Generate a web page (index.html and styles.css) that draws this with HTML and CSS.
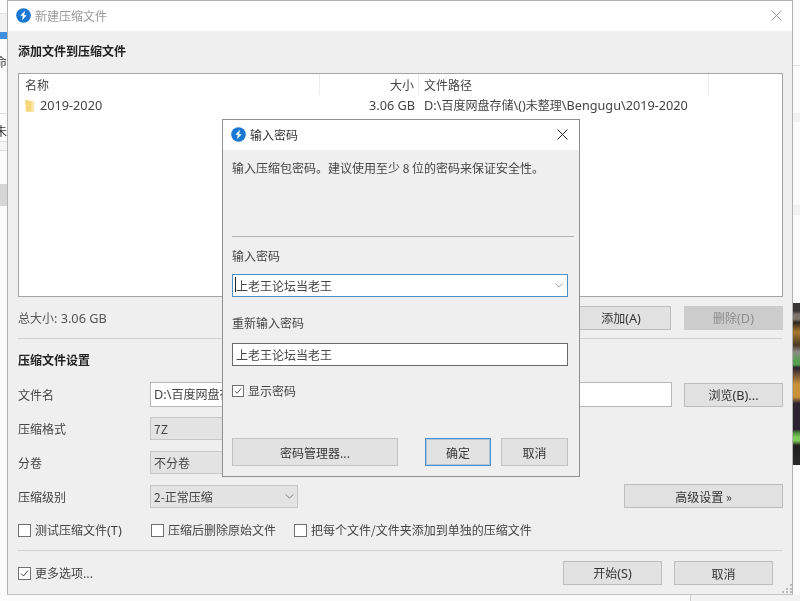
FILE: index.html
```html
<!DOCTYPE html>
<html lang="zh">
<head>
<meta charset="utf-8">
<title>新建压缩文件</title>
<link rel="stylesheet" href="styles.css">
</head>
<body>
<div class="desk">
  <div class="left-bg">
    <div class="lb lb-a"></div>
    <div class="lb lb-b"></div>
    <div class="lb lb-c"></div>
    <div class="lb lb-d"></div>
    <div class="lb lb-f"></div>
    <div class="lb-t lb-t1">命</div>
    <div class="lb-t lb-t2">未</div>
  </div>
  <div class="right-bg">
    <div class="rb rb-a"></div>
    <div class="rb rb-b"></div>
    <div class="rb rb-c"></div>
    <div class="photo"></div>
  </div>
  <div class="bottom-bg"></div>

  <div class="win main">
    <header class="bar main-bar">
      <svg class="logo" viewBox="0 0 16 16"><circle cx="8" cy="8" r="7.8" fill="#1a78d2"/><path d="M9.6 3 4.6 8.2h2.7L6.4 13l5-5.2H8.7z" fill="#fff"/></svg>
      <span class="main-title">新建压缩文件</span>
      <svg class="x x-dim" viewBox="0 0 11 11"><path d="M.5.5l10 10M10.5.5l-10 10"/></svg>
    </header>
    <div class="main-body">
      <h2 class="head head-top">添加文件到压缩文件</h2>
      <div class="list">
        <div class="list-head">
          <span class="c-name">名称</span>
          <span class="c-size">大小</span>
          <span class="c-path">文件路径</span>
          <span class="c-rest"></span>
        </div>
        <div class="list-row">
          <span class="c-name row-name"><svg class="folder" viewBox="0 0 11 14"><path d="M0 1h4l1 1h5v12H1z" fill="#f6d77c"/><path d="M7 2h3v12H7z" fill="#fbe7a8"/></svg><span class="lat">2019-2020</span></span>
          <span class="c-size lat">3.06 GB</span>
          <span class="c-path"><span class="lat">D:\</span>百度网盘存储<span class="lat">\()</span>未整理<span class="lat">\Bengugu\2019-2020</span></span>
        </div>
      </div>
      <div class="total-row">
        <span>总大小<span class="lat">: 3.06 GB</span></span>
        <div class="total-btns"><button class="btn b-add">添加<span class="lat">(A)</span></button><button class="btn b-del">删除<span class="lat">(D)</span></button></div>
      </div>
      <div class="rule"></div>
      <h2 class="head head-set">压缩文件设置</h2>
      <div class="form">
        <label>文件名</label>
        <div class="file-wrap"><div class="input file-input"><span class="lat">D:\</span>百度网盘存</div><button class="btn b-browse">浏览<span class="lat">(B)...</span></button></div>
        <label>压缩格式</label>
        <div class="select s-wide">7Z</div>
        <label>分卷</label>
        <div class="select s-wide">不分卷</div>
        <label class="level-label">压缩级别</label>
        <div class="level-wrap"><div class="select s-level">2-正常压缩<svg class="chev" viewBox="0 0 10 6"><path d="M.5.5 5 5 9.5.5"/></svg></div><button class="btn b-adv">高级设置 »</button></div>
      </div>
      <div class="checks">
        <span class="check ck1"><i class="box"></i><span>测试压缩文件<span class="lat">(T)</span></span></span>
        <span class="check ck2"><i class="box"></i>压缩后删除原始文件</span>
        <span class="check"><i class="box"></i>把每个文件/文件夹添加到单独的压缩文件</span>
      </div>
      <div class="rule rule-low"></div>
      <div class="foot">
        <span class="check"><i class="box"><svg viewBox="0 0 11 11"><path d="M2 5.5l2.5 2.5L9 2.5"/></svg></i>更多选项...</span>
        <div class="foot-btns"><button class="btn b-foot">开始<span class="lat">(S)</span></button><button class="btn b-foot">取消</button></div>
      </div>
    </div>
    <svg class="grip" viewBox="0 0 10 10"><path d="M8 1h2v2H8zM4 5h2v2H4zM8 5h2v2H8zM0 8h2v2H0zM4 8h2v2H4zM8 8h2v2H8z"/></svg>
  </div>

  <div class="win pw">
    <header class="bar pw-bar">
      <svg class="logo" viewBox="0 0 16 16"><circle cx="8" cy="8" r="7.8" fill="#1a78d2"/><path d="M9.6 3 4.6 8.2h2.7L6.4 13l5-5.2H8.7z" fill="#fff"/></svg>
      <span class="pw-title">输入密码</span>
      <svg class="x" viewBox="0 0 11 11"><path d="M.5.5l10 10M10.5.5l-10 10"/></svg>
    </header>
    <div class="pw-body">
      <p class="hint">输入压缩包密码。建议使用至少 8 位的密码来保证安全性。</p>
      <div class="pw-rule"></div>
      <div class="pw-label l1">输入密码</div>
      <div class="input pw-in focus"><i class="caret"></i>上老王论坛当老王<svg class="chev chev-pw" viewBox="0 0 10 6"><path d="M.5.5 5 5 9.5.5"/></svg></div>
      <div class="pw-label l2">重新输入密码</div>
      <div class="input pw-in dark">上老王论坛当老王</div>
      <span class="check show"><i class="box small"><svg viewBox="0 0 11 11"><path d="M2 5.5l2.5 2.5L9 2.5"/></svg></i>显示密码</span>
      <div class="pw-btns">
        <button class="btn b-mgr">密码管理器...</button>
        <button class="btn b-ok">确定</button>
        <button class="btn b-cancel">取消</button>
      </div>
    </div>
  </div>
</div>
</body>
</html>
```

FILE: styles.css
```css
* { box-sizing: border-box; }
html, body { margin: 0; padding: 0; }
body { width: 800px; height: 601px; overflow: hidden; background: #fbfbfb; font-family: "Noto Sans CJK SC", "Liberation Sans", sans-serif; font-size: 12px; color: #333; }
.desk { position: relative; width: 800px; height: 601px; overflow: hidden; filter: blur(0.3px); }
.lat { font-family: "Noto Sans", "Noto Sans CJK SC", sans-serif; font-size: 12.7px; }

.left-bg { position: absolute; left: 0; top: 0; width: 8px; height: 601px; background: #fcfcfc; overflow: hidden; }
.lb { position: absolute; left: 0; width: 8px; }
.lb-a { top: 13px; height: 19px; background: #f2f2f2; border-top: 1px solid #e2e2e2; }
.lb-b { top: 32px; height: 7px; background: #3d8fdc; }
.lb-c { top: 113px; height: 1px; background: #ddd; }
.lb-d { top: 141px; height: 10px; background: #f4f4f4; border-top: 1px solid #ddd; border-bottom: 1px solid #ddd; }
.lb-f { top: 184px; height: 22px; background: #d6d6d6; }
.lb-t { position: absolute; left: -5px; font-size: 12px; line-height: 14px; width: 13px; overflow: hidden; }
.lb-t1 { top: 55px; }
.lb-t2 { top: 124px; }

.right-bg { position: absolute; left: 792px; top: 0; width: 8px; height: 601px; background: #fbfbfb; }
.rb { position: absolute; left: 0; width: 8px; height: 1px; background: #e4e4e4; }
.rb-a { top: 65px; }
.rb-b { top: 113px; height: 9px; background: #f1f1f1; }
.rb-c { top: 205px; height: 10px; background: #f1f1f1; }
.photo { position: absolute; left: 1px; top: 303px; width: 7px; height: 162px; background: linear-gradient(180deg, #3a3634 0 5%, #7d746a 7% 10%, #2f2620 12%, #a8782c 18%, #4b3a24 26%, #8a8a84 30%, #56a050 36% 38%, #2a2030 40%, #c8913a 50% 58%, #2c2230 62% 78%, #4b8a3c 80%, #7ecb5c 83% 85%, #1e1e1e 88%, #2a2a2a 100%); }
.bottom-bg { position: absolute; left: 690px; top: 595px; width: 110px; height: 6px; background: #f2f2f2; border-left: 1px solid #cfcfcf; }

.win { position: absolute; background: #efefef; }
.main { left: 7px; top: 0; width: 786px; height: 595px; border: 1px solid #b2b2b2; border-bottom-color: #c4c4c4; }
.bar { display: flex; align-items: center; background: #fff; }
.main-bar { height: 30px; padding: 0 10px 1px 8px; }
.logo { width: 15px; height: 15px; flex: none; }
.main-title { margin-left: 4px; color: #9a9a9a; }
.x { width: 11px; height: 11px; margin-left: auto; fill: none; stroke: #222; stroke-width: 1; }
.x-dim { stroke: #9a9a9a; }
.main-body { padding: 0 9px 0 10px; position: relative; }
.head { margin: 0; font-size: 12px; line-height: 16px; font-weight: 700; color: #222; }
.head-top { padding-top: 12px; }
.list { margin-top: 14px; width: 765px; height: 224px; border: 1px solid #a4a4a4; background: #fff; }
.list-head, .list-row { display: flex; height: 20px; line-height: 20px; color: #444; }
.list-head { height: 21px; line-height: 21px; }
.c-name { width: 301px; padding-left: 6px; flex: none; }
.c-size { width: 99px; padding-right: 4px; text-align: right; flex: none; }
.c-path { width: 290px; padding-left: 5px; flex: none; white-space: nowrap; }
.c-rest { flex: 1; }
.list-head .c-name, .list-head .c-size, .list-head .c-path { border-right: 1px solid #ececec; }
.row-name { display: flex; align-items: center; gap: 5px; }
.folder { width: 10px; height: 13px; flex: none; }
.total-row { display: flex; justify-content: space-between; align-items: center; margin-top: 9px; height: 24px; color: #555; }
.total-btns { display: flex; gap: 13px; }
.btn { font: inherit; font-size: 12px; color: #333; background: #e1e1e1; border: 1px solid #bdbdbd; padding: 0; height: 24px; display: block; }
.b-add { width: 100px; }
.b-del { width: 99px; background: #cccccc; border-color: #cccccc; color: #8d8d8d; }
.rule { height: 1px; background: #d0d0d0; margin-top: 8px; width: 764px; }
.head-set { padding-top: 13px; }
.form { margin-top: 14px; display: grid; grid-template-columns: 132px 1fr; row-gap: 11px; align-items: center; }
.form label { color: #444; }
.input { background: #fff; border: 1px solid #9b9b9b; height: 24px; line-height: 22px; padding-left: 3px; color: #444; white-space: nowrap; overflow: hidden; }
.file-wrap { display: flex; gap: 12px; align-items: center; margin-bottom: -1px; }
.file-input { width: 522px; height: 25px; border-color: #b8b8b8; }
.b-browse { width: 99px; }
.select { height: 23px; line-height: 21px; background: #e3e3e3; border: 1px solid #c6c6c6; padding-left: 3px; color: #444; position: relative; }
.s-wide { width: 150px; }
.level-label { margin-top: -1px; }
.level-wrap { display: flex; justify-content: space-between; align-items: center; margin-top: -1px; }
.s-level { width: 148px; }
.b-adv { width: 159px; }
.chev { position: absolute; right: 3px; top: 8px; width: 9px; height: 5px; fill: none; stroke: #666; stroke-width: 1; }
.checks { display: flex; align-items: center; margin-top: 14px; height: 16px; color: #444; }
.check { display: inline-flex; align-items: center; gap: 4px; white-space: nowrap; color: #444; line-height: 16px; }
.box { width: 13px; height: 13px; background: #fff; border: 1px solid #6f6f6f; flex: none; display: block; }
.box svg { display: block; width: 11px; height: 11px; fill: none; stroke: #444; stroke-width: 1; }
.box.small { width: 12px; height: 12px; }
.box.small svg { width: 10px; height: 10px; }
.ck1 { width: 133px; }
.ck2 { width: 143px; }
.rule-low { margin-top: 12px; }
.foot { display: flex; justify-content: space-between; align-items: center; margin-top: 10px; }
.foot-btns { display: flex; gap: 12px; padding-right: 10px; }
.b-foot { width: 99px; }
.grip { position: absolute; right: 0; bottom: 1px; width: 10px; height: 10px; fill: #bbb; }

.pw { left: 222px; top: 119px; width: 358px; height: 358px; border: 1px solid #8f8f8f; }
.pw-bar { height: 30px; padding: 0 11px 1px 8px; }
.pw-title { margin-left: 4px; color: #333; }
.pw-body { padding: 0 9px; position: relative; }
.hint { margin: 0; padding-top: 10px; line-height: 16px; color: #444; white-space: nowrap; }
.pw-rule { height: 1px; background: #b4b4b4; margin-top: 60px; width: 342px; }
.pw-label { color: #444; line-height: 16px; }
.l1 { margin-top: 11px; }
.l2 { margin-top: 18px; }
.pw-in { width: 336px; height: 23px; line-height: 21px; position: relative; padding-left: 3px; }
.focus { margin-top: 10px; border-color: #4a90c9; }
.dark { margin-top: 12px; border-color: #6a6a6a; }
.caret { position: absolute; left: 2px; top: 2px; width: 1px; height: 15px; background: #222; }
.chev-pw { right: 4px; top: 8px; width: 8px; stroke: #888; }
.show { margin-top: 17px; display: flex; }
.pw-btns { display: flex; margin-top: 39px; }
.pw-btns .btn { height: 28px; background: #e2e2e2; border-color: #c2c2c2; }
.b-mgr { width: 166px; }
.pw-btns .b-ok { width: 66px; margin-left: 27px; border-color: #4a90d0; box-shadow: inset 0 0 0 1px rgba(74, 144, 208, 0.35); }
.pw-btns .b-cancel { width: 67px; margin-left: 10px; }
```
